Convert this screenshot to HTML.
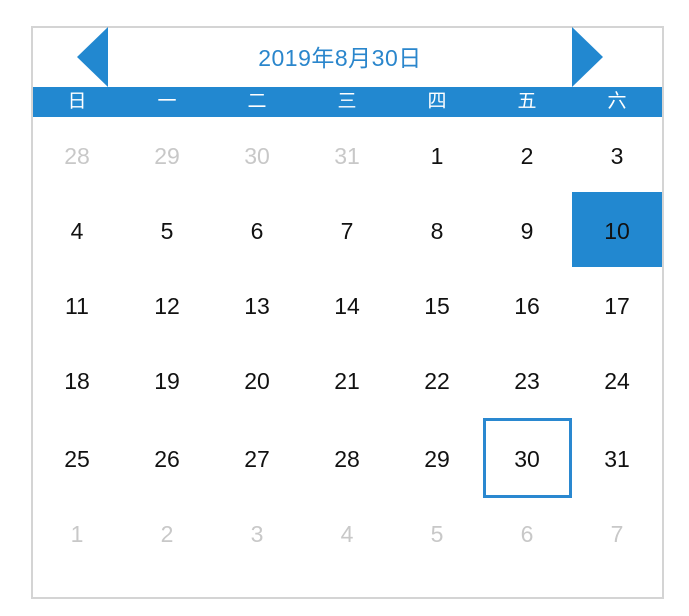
<!DOCTYPE html><html><head><style>
body{margin:0;width:689px;height:616px;background:#fff;position:relative;font-family:"Liberation Sans","Noto Sans CJK SC",sans-serif;overflow:hidden}
.box{position:absolute;left:31px;top:26px;width:629px;height:569px;border:2px solid #d4d4d4}
.bar{position:absolute;left:33px;top:87px;width:629px;height:30px;background:#2288d0}
.w{position:absolute;top:87px;width:90px;height:30px;line-height:30px;text-align:center;color:#fff;font-size:19px}
.d{position:absolute;width:90px;height:30px;line-height:30px;text-align:center;font-size:23px;color:#111}
.g{color:#c8c8c8}
.title{position:absolute;left:108px;width:464px;top:39px;text-align:center;color:#2a86cc;font-size:23px;letter-spacing:0.5px}
</style></head><body>
<div class="box"></div>
<svg style="position:absolute;left:0;top:0" width="689" height="616">
<polygon points="108,27 108,87 77,57" fill="#2288d0"/>
<polygon points="572,27 572,87 603,57" fill="#2288d0"/>
<rect x="572" y="192" width="90" height="75" fill="#2288d0"/>
<rect x="484.5" y="419.5" width="86" height="77" fill="none" stroke="#2a88d0" stroke-width="3"/>
</svg>
<div class="title">2019年8月30日</div>
<div class="bar"></div>
<div class="w" style="left:32px">日</div><div class="w" style="left:122px">一</div><div class="w" style="left:212px">二</div><div class="w" style="left:302px">三</div><div class="w" style="left:392px">四</div><div class="w" style="left:482px">五</div><div class="w" style="left:572px">六</div>
<div id="g"></div>
<script>
var rows=[[28,29,30,31,1,2,3],[4,5,6,7,8,9,10],[11,12,13,14,15,16,17],[18,19,20,21,22,23,24],[25,26,27,28,29,30,31],[1,2,3,4,5,6,7]];
var ys=[156,231,306,381,459,534],h='';
rows.forEach(function(r,i){r.forEach(function(n,j){var g=(i==0&&j<4)||i==5;h+='<div class="d'+(g?' g':'')+'" style="left:'+(32+90*j)+'px;top:'+(ys[i]-15)+'px">'+n+'</div>';});});
document.getElementById('g').innerHTML=h;
</script>
</body></html>
